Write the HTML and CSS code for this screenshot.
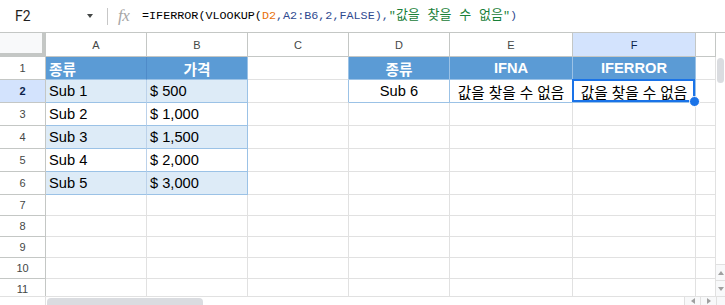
FILE: index.html
```html
<!DOCTYPE html>
<html lang="ko">
<head>
<meta charset="utf-8">
<title>IFERROR</title>
<link rel="stylesheet" href="styles.css">
</head>
<body>
<div class="app">
  <div class="formula-bar">
    <div class="name-box"><span class="name">F2</span><span class="caret"></span></div>
    <div class="divider"></div>
    <div class="fx">fx</div>
    <div class="formula"><span class="f-fn">=IFERROR(VLOOKUP(</span><span class="f-ref">D2</span><span class="f-arg">,A2:B6,2,FALSE),</span><span class="f-str">"<span class="ko">값을 찾을 수 없음</span>"</span><span class="f-arg">)</span></div>
  </div>
  <div class="sheet">
    <div class="sheet-main">
      <div class="grid">
        <div class="corner"></div>
        <div class="ch">A</div><div class="ch">B</div><div class="ch">C</div><div class="ch">D</div><div class="ch">E</div><div class="ch sel-h">F</div><div class="ch"></div>

        <div class="rh">1</div>
        <div class="c hdr ta a">종류</div><div class="c hdr ta b center">가격</div><div class="c tl"></div>
        <div class="c hdr tt center">종류</div><div class="c hdr tt center bold">IFNA</div><div class="c hdr tt center bold">IFERROR</div><div class="c"></div>

        <div class="rh sel-r">2</div>
        <div class="c band ta a">Sub 1</div><div class="c band ta b">$ 500</div><div class="c tl"></div>
        <div class="c tt center">Sub 6</div><div class="c tt center">값을 찾을 수 없음</div><div class="c tt center active">값을 찾을 수 없음</div><div class="c"></div>

        <div class="rh">3</div>
        <div class="c ta a">Sub 2</div><div class="c ta b">$ 1,000</div><div class="c"></div>
        <div class="c"></div><div class="c"></div><div class="c"></div><div class="c"></div>

        <div class="rh">4</div>
        <div class="c band ta a">Sub 3</div><div class="c band ta b">$ 1,500</div><div class="c"></div>
        <div class="c"></div><div class="c"></div><div class="c"></div><div class="c"></div>

        <div class="rh">5</div>
        <div class="c ta a">Sub 4</div><div class="c ta b">$ 2,000</div><div class="c"></div>
        <div class="c"></div><div class="c"></div><div class="c"></div><div class="c"></div>

        <div class="rh">6</div>
        <div class="c band ta a">Sub 5</div><div class="c band ta b">$ 3,000</div><div class="c"></div>
        <div class="c"></div><div class="c"></div><div class="c"></div><div class="c"></div>

        <div class="rh">7</div>
        <div class="c"></div><div class="c"></div><div class="c"></div><div class="c"></div><div class="c"></div><div class="c"></div><div class="c"></div>
        <div class="rh">8</div>
        <div class="c"></div><div class="c"></div><div class="c"></div><div class="c"></div><div class="c"></div><div class="c"></div><div class="c"></div>
        <div class="rh">9</div>
        <div class="c"></div><div class="c"></div><div class="c"></div><div class="c"></div><div class="c"></div><div class="c"></div><div class="c"></div>
        <div class="rh">10</div>
        <div class="c"></div><div class="c"></div><div class="c"></div><div class="c"></div><div class="c"></div><div class="c"></div><div class="c"></div>
        <div class="rh">11</div>
        <div class="c"></div><div class="c"></div><div class="c"></div><div class="c"></div><div class="c"></div><div class="c"></div><div class="c"></div>
      </div>
      <div class="vscroll">
        <div class="vtrack"><div class="vthumb"></div></div>
        <div class="vbtn"><span class="tri-up"></span></div>
        <div class="vbtn"><span class="tri-down"></span></div>
      </div>
    </div>
    <div class="hscroll">
      <div class="hlead"></div>
      <div class="htrack"><div class="hthumb"></div></div>
      <div class="hbtn"><span class="tri-left"></span></div>
      <div class="hbtn"><span class="tri-right"></span></div>
      <div class="hcorner"></div>
    </div>
  </div>
</div>
</body>
</html>
```

FILE: styles.css
```css
* { box-sizing: border-box; }
html, body { margin: 0; padding: 0; background: #fff; }
body { width: 725px; height: 305px; overflow: hidden; font-family: "Liberation Sans", "Noto Sans CJK KR", sans-serif; }

.app { width: 725px; height: 305px; display: flex; flex-direction: column; }

/* formula bar */
.formula-bar {
  height: 33px;
  border-bottom: 1px solid #c4c7c5;
  display: flex;
  align-items: center;
  flex: none;
}
.name-box { width: 107px; display: flex; align-items: center; padding-left: 15px; padding-right: 14px; height: 100%; }
.name { font-family: Roboto, "Liberation Sans", sans-serif; font-size: 14px; color: #1f1f1f; }
.caret {
  margin-left: auto;
  width: 0; height: 0;
  border-left: 3.5px solid transparent;
  border-right: 3.5px solid transparent;
  border-top: 4px solid #444746;
}
.divider { width: 1px; height: 17px; background: #c7c7c7; }
.fx {
  margin-left: 10px;
  width: 24px;
  font-family: "Liberation Serif", serif;
  font-style: italic;
  font-size: 17px;
  color: #a6a6a6;
  letter-spacing: -0.5px;
  line-height: 1;
  margin-top: -1px;
}
.formula {
  font-family: "Liberation Mono", "Noto Sans CJK KR", monospace;
  font-size: 11.75px;
  white-space: pre;
  color: #000;
  line-height: 1;
}
.f-ref { color: #e8710a; }
.f-arg { color: #2f4a8f; }
.f-str { color: #188038; }
.ko { font-size: 13px; }

/* sheet */
.sheet { flex: 1; display: flex; flex-direction: column; }
.sheet-main { height: 263px; display: flex; flex: none; }
.grid {
  width: 716px;
  height: 263px;
  overflow: hidden;
  display: grid;
  grid-template-columns: 46px 101px 101px 101px 101px 123px 123px 20px;
  grid-template-rows: 24px repeat(6, 23px) repeat(5, 21px);
}
.corner {
  background: #f8f9fa;
  border-right: 4px solid #c4c7c5;
  border-bottom: 4px solid #c4c7c5;
}
.ch {
  background: #fff;
  border-right: 1px solid #c4c7c5;
  border-bottom: 1px solid #c4c7c5;
  font-size: 11px;
  color: #444746;
  display: flex;
  align-items: center;
  justify-content: center;
  padding-top: 1px;
}
.ch.sel-h { background: #d3e3fd; color: #0b1f4a; }
.rh {
  background: #fff;
  border-right: 1px solid #c4c7c5;
  border-bottom: 1px solid #c4c7c5;
  font-size: 11px;
  color: #444746;
  display: flex;
  align-items: center;
  justify-content: center;
}
.rh.sel-r { background: #d3e3fd; color: #0b1f4a; font-weight: 700; }

.c {
  border-right: 1px solid #e1e1e1;
  border-bottom: 1px solid #e1e1e1;
  font-size: 14.67px;
  color: #000;
  display: flex;
  align-items: center;
  padding: 0 3px;
  white-space: nowrap;
  overflow: hidden;
}
.center { justify-content: center; }
.bold { font-weight: 700; }
.hdr { background: #5b9bd5; color: #fff; font-weight: 700; }
.band { background: #ddebf7; }
.ta { border-bottom-color: #9bc2e6; }
.ta.a { border-right-color: #bcd2ea; }
.ta.b { border-right-color: #9bc2e6; }
.hdr.ta.a { border-right-color: #4f8bc9; }
.tl { border-right-color: #9bc2e6; }
.tt { border-right-color: #9bc2e6; border-bottom-color: #9bc2e6; }

.active { position: relative; overflow: visible; z-index: 2; }
.active::before {
  content: "";
  position: absolute;
  top: -1px; left: -1px; right: 0; bottom: 0;
  border: 2px solid #1a73e8;
  pointer-events: none;
}
.active::after {
  content: "";
  position: absolute;
  right: -5px; bottom: -5px;
  width: 9px; height: 9px;
  border-radius: 50%;
  background: #1a73e8;
  border: 1px solid #fff;
}

/* vertical scrollbar */
.vscroll { width: 9px; display: flex; flex-direction: column; background: #fff; }
.vtrack { flex: 1; padding-top: 25px; padding-left: 1px; }
.vthumb { width: 7px; height: 25px; border-radius: 4px; background: #dadce0; }
.vbtn {
  height: 16px;
  border-top: 1px solid #e1e1e1;
  background: #f8f9fa;
  display: flex;
  align-items: center;
  justify-content: center;
}
.tri-up { width: 0; height: 0; border-left: 3px solid transparent; border-right: 3px solid transparent; border-bottom: 4px solid #a0a0a0; }
.tri-down { width: 0; height: 0; border-left: 3px solid transparent; border-right: 3px solid transparent; border-top: 4px solid #a0a0a0; }

/* horizontal scrollbar */
.hscroll { height: 9px; border-top: 1px solid #e1e1e1; display: flex; flex: none; }
.hlead { width: 46px; border-right: 1px solid #e1e1e1; }
.htrack { flex: 1; padding-left: 1px; padding-top: 1px; }
.hthumb { width: 156px; height: 8px; border-radius: 4px 4px 0 0; background: #dadce0; }
.hbtn {
  width: 16px;
  border-left: 1px solid #e1e1e1;
  background: #f8f9fa;
  display: flex;
  align-items: center;
  justify-content: center;
}
.hcorner { width: 9px; border-left: 1px solid #e1e1e1; background: #f8f9fa; }
.tri-left { width: 0; height: 0; border-top: 3px solid transparent; border-bottom: 3px solid transparent; border-right: 4px solid #a0a0a0; }
.tri-right { width: 0; height: 0; border-top: 3px solid transparent; border-bottom: 3px solid transparent; border-left: 4px solid #a0a0a0; }
```
